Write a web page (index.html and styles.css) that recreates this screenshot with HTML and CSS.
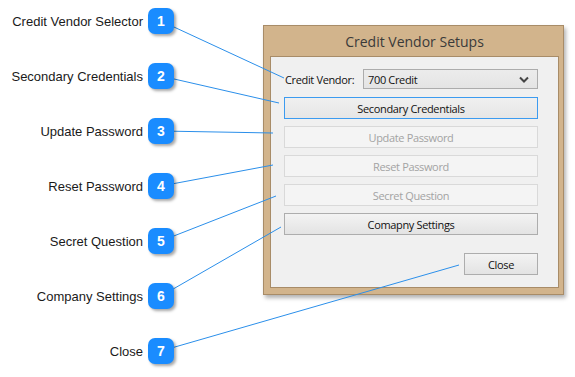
FILE: index.html
```html
<!DOCTYPE html>
<html>
<head>
<meta charset="utf-8">
<link rel="stylesheet" href="styles.css">
</head>
<body>
<div class="canvas">
  <div class="callouts">
    <div class="row"><span class="label">Credit Vendor Selector</span><span class="badge">1</span></div>
    <div class="row"><span class="label">Secondary Credentials</span><span class="badge">2</span></div>
    <div class="row"><span class="label">Update Password</span><span class="badge">3</span></div>
    <div class="row"><span class="label">Reset Password</span><span class="badge">4</span></div>
    <div class="row"><span class="label">Secret Question</span><span class="badge">5</span></div>
    <div class="row"><span class="label">Company Settings</span><span class="badge">6</span></div>
    <div class="row"><span class="label">Close</span><span class="badge">7</span></div>
  </div>

  <div class="window">
    <div class="title">Credit Vendor Setups</div>
    <div class="panel">
      <div class="vendor-row">
        <span class="vendor-label">Credit Vendor:</span>
        <div class="select">
          <span>700 Credit</span>
          <svg class="chev" width="10" height="7" viewBox="0 0 10 7"><path d="M1 1.5 L5 5.5 L9 1.5" fill="none" stroke="#444" stroke-width="2"/></svg>
        </div>
      </div>
      <div class="btn focused">Secondary Credentials</div>
      <div class="btn disabled">Update Password</div>
      <div class="btn disabled">Reset Password</div>
      <div class="btn disabled">Secret Question</div>
      <div class="btn">Comapny Settings</div>
      <div class="close-row"><div class="btn close">Close</div></div>
    </div>
  </div>

  <svg class="lines" width="575" height="377" viewBox="0 0 575 377">
    <g stroke="#2b8fea" stroke-width="1" fill="none">
      <line x1="161" y1="21" x2="284" y2="78"/>
      <line x1="161" y1="76" x2="279" y2="103"/>
      <line x1="161" y1="131" x2="273" y2="133"/>
      <line x1="161" y1="186" x2="273" y2="165"/>
      <line x1="161" y1="241" x2="276" y2="196"/>
      <line x1="161" y1="296" x2="281" y2="227"/>
      <line x1="161" y1="351" x2="459" y2="265"/>
    </g>
  </svg>
</div>
</body>
</html>
```

FILE: styles.css
```css
html, body {
  margin: 0;
  padding: 0;
  background: #ffffff;
}

.canvas {
  position: relative;
  width: 575px;
  height: 377px;
  display: flex;
  align-items: flex-start;
  overflow: hidden;
}

.callouts {
  position: relative;
  z-index: 2;
  width: 175px;
  padding-top: 8px;
  display: flex;
  flex-direction: column;
  gap: 29px;
}

.row {
  display: flex;
  align-items: center;
  justify-content: flex-end;
  gap: 5px;
  height: 26px;
  padding-right: 1px;
}

.label {
  font-family: "Liberation Sans", Arial, sans-serif;
  font-size: 13px;
  color: #1a1a1a;
}

.badge {
  width: 26px;
  height: 26px;
  border-radius: 7px;
  background: #1a8cff;
  color: #ffffff;
  font-family: "Liberation Sans", Arial, sans-serif;
  font-weight: bold;
  font-size: 14px;
  display: flex;
  align-items: center;
  justify-content: center;
  box-shadow: 2px 2px 3px rgba(0, 0, 0, 0.35);
}

.lines {
  position: absolute;
  left: 0;
  top: 0;
  z-index: 1;
  pointer-events: none;
}

.window {
  margin-left: 88px;
  margin-top: 25px;
  width: 289px;
  background: #d2b48c;
  border: 1px solid #a88c68;
  box-shadow: 2px 3px 4px rgba(0, 0, 0, 0.3);
  padding: 0 4px 6px 6px;
}

.title {
  height: 29px;
  display: flex;
  align-items: center;
  justify-content: center;
  font-family: "Open Sans", "Noto Sans", sans-serif;
  font-size: 14px;
  color: #3a3a3a;
  padding-top: 1px;
}

.panel {
  background: #f0f0f0;
  border: 1px solid #a88c68;
  padding: 12px 20px 12px 13px;
  display: flex;
  flex-direction: column;
  gap: 7px;
  font-family: "Open Sans", "Noto Sans", sans-serif;
  font-size: 11px;
  letter-spacing: -0.35px;
}

.vendor-row {
  display: flex;
  align-items: center;
  height: 20px;
  margin-bottom: 1px;
}

.vendor-label {
  width: 78px;
  padding-left: 1px;
  color: #111;
}

.select {
  flex: 1;
  box-sizing: border-box;
  height: 20px;
  border: 1px solid #acacac;
  background: linear-gradient(#ececec, #e4e4e4);
  display: flex;
  align-items: center;
  justify-content: space-between;
  padding: 0 8px 0 4px;
  color: #111;
}

.chev {
  display: block;
}

.btn {
  box-sizing: border-box;
  height: 22px;
  border: 1px solid #adadad;
  background: linear-gradient(#f3f3f3, #e3e3e3);
  color: #111;
  display: flex;
  align-items: center;
  justify-content: center;
}

.btn.focused {
  border-color: #3c9bf0;
  background: linear-gradient(#f0f0f0, #e6e6e6);
}

.btn.disabled {
  border-color: #d9d9d9;
  background: #f4f4f4;
  color: #a3a3a3;
}

.close-row {
  display: flex;
  justify-content: flex-end;
  margin-top: 11px;
}

.btn.close {
  width: 74px;
}
```
